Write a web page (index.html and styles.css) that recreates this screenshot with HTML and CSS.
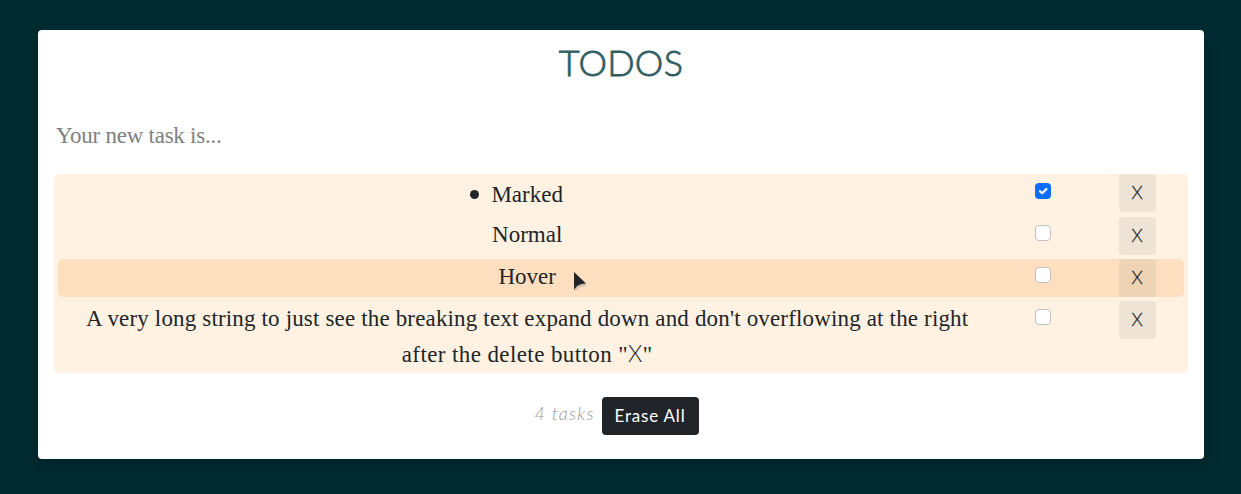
FILE: index.html
```
<!DOCTYPE html>
<html lang="en">
<head>
<meta charset="utf-8">
<title>Todos</title>
<link rel="stylesheet" href="styles.css">
</head>
<body>
<main class="card">
  <h1 class="title">TODOS</h1>
  <div class="new-task">Your new task is...</div>
  <ul class="list">
    <li class="row first">
      <div class="task marked"><span class="bullet"></span><span class="t-marked">Marked</span></div>
      <div class="check"><span class="box checked"><svg viewBox="0 0 16 16" width="16" height="16"><path d="M5 8.200 7.200 10.200 11.400 6" fill="none" stroke="#fff" stroke-width="2.200" stroke-linecap="round" stroke-linejoin="round"/></svg></span></div>
      <div class="action"><button class="delete">X</button></div>
    </li>
    <li class="row">
      <div class="task"><span class="t-normal">Normal</span></div>
      <div class="check"><span class="box"></span></div>
      <div class="action"><button class="delete">X</button></div>
    </li>
    <li class="row hover">
      <div class="task"><span class="t-hover">Hover</span></div>
      <div class="check"><span class="box"></span></div>
      <div class="action"><button class="delete">X</button></div>
      <svg class="cursor" width="16" height="20" viewBox="0 0 16 20"><path d="M2 3v17c2-4 6-6 12-6z" fill="#bdb2a6" opacity=".7"/><path d="M1 0v18.200c2-4 5-6.500 12-6.700z" fill="#212529"/></svg>
    </li>
    <li class="row">
      <div class="task"><span class="t-long1">A very long string to just see the breaking text expand down and don't overflowing at the right</span><br><span class="t-long2">after the delete button "<span class="sans-x">X</span>"</span></div>
      <div class="check"><span class="box"></span></div>
      <div class="action"><button class="delete">X</button></div>
    </li>
  </ul>
  <footer class="footer"><em class="count">4 tasks</em><button class="erase">Erase All</button></footer>
</main>
</body>
</html>
```
FILE: styles.css
```
* { box-sizing: border-box; }
body {
  margin: 0;
  height: 494px;
  padding: 30px 37px 35px 38px;
  background: #002b30;
  color: #212529;
  overflow: hidden;
}
.card {
  height: 429px;
  padding: 0 16px;
  background: #fff;
  border-radius: 4px;
  box-shadow: 0 8px 16px rgba(0, 0, 0, .15);
}
.title {
  margin: 0;
  padding-top: 8px;
  height: 82px;
  font: 300 36px/48px Lato, sans-serif;
  letter-spacing: .3px;
  text-align: center;
  color: #2f5d62;
  -webkit-text-stroke: .8px #2f5d62;
}
.new-task {
  height: 62px;
  padding-left: 2px;
  font: 23px/48px "Liberation Serif", serif;
  letter-spacing: -.25px;
  color: #808080;
}
.list {
  list-style: none;
  margin: 0;
  padding: 0 4px;
  height: 199px;
  display: flex;
  flex-direction: column;
  gap: 4px;
  background: #fff2e2;
  border-radius: 5px;
}
.row {
  position: relative;
  display: grid;
  grid-template-columns: 10fr 1fr 1fr;
  flex-shrink: 0;
  min-height: 38px;
  border-radius: 5px;
}
.first { height: 39px; }
.hover { background: #fee0c0; }
.task {
  font: 23px/36px "Liberation Serif", serif;
  text-align: center;
  white-space: nowrap;
}
.marked {
  display: flex;
  justify-content: center;
  align-items: flex-start;
  gap: 12px;
  padding-top: 3px;
  padding-right: 21px;
}
.bullet {
  width: 9px;
  height: 9px;
  margin-top: 13px;
  border-radius: 50%;
  background: #212529;
}
.t-long1 { letter-spacing: .16px; }
.t-long2 { letter-spacing: .4px; }
.sans-x { font-family: Lato, sans-serif; font-weight: 300; line-height: 0; }
.check { display: flex; justify-content: center; padding-top: 8px; }
.first .check { padding-top: 9px; }
.box {
  width: 16px;
  height: 16px;
  border: 1px solid #bfbfbf;
  border-radius: 4px;
  background: #fff;
}
.checked { border: 0; background: #0d6efd; }
.checked svg { display: block; }
.action { display: flex; justify-content: center; align-items: flex-start; }
button { border: 0; border-radius: 4px; padding: 0; }
.delete {
  width: 37px;
  height: 38px;
  padding-bottom: 3px;
  background: rgba(33, 37, 41, .07);
  color: #212529;
  font: 300 18px/34px Lato, sans-serif;
  -webkit-text-stroke: .3px #212529;
}
.cursor { position: absolute; left: 515px; top: 13px; }
.footer {
  display: flex;
  align-items: flex-start;
  justify-content: center;
  gap: 7px;
  padding: 24px 10px 0 0;
}
.count {
  width: 60px;
  margin-left: 1px;
  font: italic 300 18px/33px Lato, sans-serif;
  letter-spacing: 1.2px;
  white-space: nowrap;
  color: #999;
}
.erase {
  width: 97px;
  height: 38px;
  padding-bottom: 1px;
  background: #212529;
  color: #fff;
  font: 400 17px/35px Lato, sans-serif;
  letter-spacing: .8px;
}
```
